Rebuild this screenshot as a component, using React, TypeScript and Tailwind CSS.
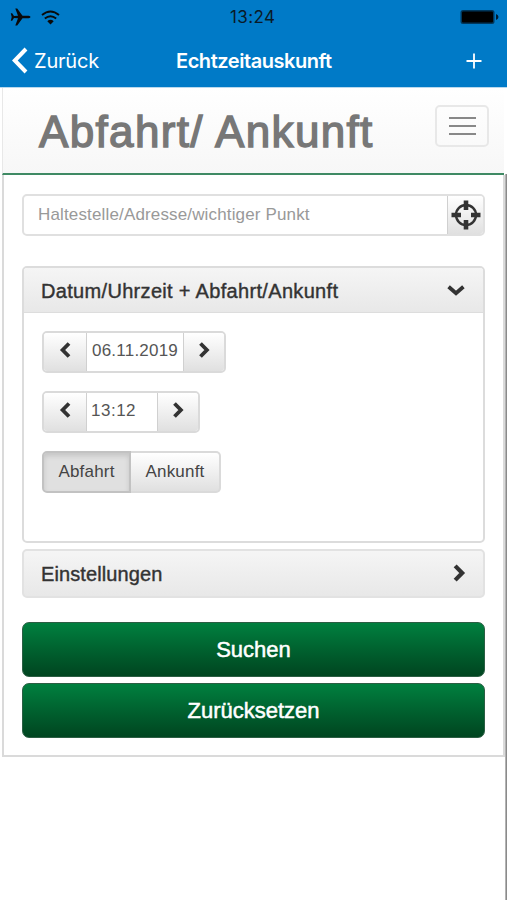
import React from "react";

type Dir = "left" | "right" | "down";

function Chevron({ dir, size = 20 }: { dir: Dir; size?: number }) {
  const d =
    dir === "left"
      ? "M14 3.5 L7.6 10 L14 16.5"
      : dir === "right"
        ? "M6.5 3.5 L12.9 10 L6.5 16.5"
        : "M2.6 6.8 L10 13.2 L17.4 6.8";
  return (
    <svg width={size} height={size} viewBox="0 0 20 20" fill="none" stroke="#333" strokeWidth="3.8">
      <path d={d} />
    </svg>
  );
}

const stepBtn =
  "flex items-center justify-center bg-linear-to-b from-white to-[#e0e0e0] h-full border-[#d0d0d0] pb-[4px]";

function Stepper({ value, fieldClass }: { value: string; fieldClass: string }) {
  return (
    <div className="flex h-[42px] w-fit overflow-hidden rounded-[5px] border-2 border-[#dadada]">
      <button className={`${stepBtn} w-[43px] border-r`}>
        <Chevron dir="left" />
      </button>
      <div className={`flex items-center whitespace-nowrap bg-white pb-[2px] text-[17px] text-[#555] ${fieldClass}`}>
        {value}
      </div>
      <button className={`${stepBtn} w-[41px] border-l`}>
        <Chevron dir="right" />
      </button>
    </div>
  );
}

function StatusBar() {
  return (
    <div className="relative flex h-[34px] items-center justify-between pl-[10px] pr-[8px]">
      <div className="flex items-center gap-[10px]">
        <svg width="21" height="18" viewBox="0 0 21 18" fill="#0a0a0a">
          <path d="M20.5 9 C20.5 8.1 19 7.7 17.5 7.7 L12.5 7.7 L7.2 0.5 L5.3 0.5 L8 7.7 L4 7.9 L2.2 5.3 L0.8 5.3 L1.7 9 L0.8 12.7 L2.2 12.7 L4 10.1 L8 10.3 L5.3 17.5 L7.2 17.5 L12.5 10.3 L17.5 10.3 C19 10.3 20.5 9.9 20.5 9Z" />
        </svg>
        <svg width="19" height="15" viewBox="0 0 19 15" fill="none" stroke="#0a0a0a" strokeWidth="1.9">
          <path d="M1 5 Q9.5 -2.2 18 5" />
          <path d="M3.8 8.6 Q9.5 3.8 15.2 8.6" />
          <path d="M6.3 11.2 Q9.5 8.5 12.7 11.2 L9.5 14.4 Z" fill="#0a0a0a" stroke="none" />
        </svg>
      </div>
      <span className="absolute left-[230px] top-[6px] whitespace-nowrap font-['Inter',sans-serif] text-[17px] leading-[22px] tracking-[0.4px] text-[#0a1a28]">
        13:24
      </span>
      <svg width="39" height="16" viewBox="0 0 39 16">
        <rect x="0.5" y="1" width="34" height="14" rx="2.5" fill="#00375c" />
        <rect x="2" y="2.5" width="31" height="11" rx="1" fill="#000" />
        <path d="M36 5 Q38.5 6 38.5 8 Q38.5 10 36 11Z" fill="#001c30" />
      </svg>
    </div>
  );
}

function NavBar() {
  return (
    <div className="flex h-[53px] items-center pl-[12px] pr-[25px] font-['Inter',sans-serif] text-white">
      <svg width="16" height="27" viewBox="0 0 16 27" fill="none" stroke="#fff" strokeWidth="4">
        <path d="M14 2 L2.8 13.5 L14 25" />
      </svg>
      <span className="ml-[6px] w-[142px] whitespace-nowrap text-[20px] tracking-[-0.2px]">Zurück</span>
      <span className="flex-1 whitespace-nowrap text-[20px] font-semibold tracking-[-0.45px]">
        Echtzeitauskunft
      </span>
      <svg width="16" height="16" viewBox="0 0 16 16" stroke="#fff" strokeWidth="1.8">
        <path d="M8 0.5V15.5M0.5 8H15.5" />
      </svg>
    </div>
  );
}

export default function App() {
  return (
    <div className="h-[900px] w-[507px] overflow-hidden bg-white font-['Liberation_Sans',Arial,sans-serif]">
      <header className="h-[87px] bg-[#007ac7]">
        <StatusBar />
        <NavBar />
      </header>
      <div className="flex h-[813px] border-t border-[#b9d9ee]">
        <main className="ml-[2px] flex-1">
          <div className="mr-px flex h-[87px] justify-between border-b-2 border-l border-b-[#3f8a64] border-l-[#e8e8e8] bg-linear-to-b from-white to-[#f7f7f7] pl-[36px] pr-[15px]">
            <h1 className="mt-[18px] whitespace-nowrap text-[44px] leading-[52px] tracking-[1.35px] text-[#777] [-webkit-text-stroke:1.4px_#777]">
              Abfahrt/ Ankunft
            </h1>
            <button className="mt-[17px] flex h-[42px] w-[54px] flex-col items-center justify-center gap-[6px] rounded-[5px] border-2 border-[#e8e8e8]">
              <span className="h-[2px] w-[27px] bg-[#888]" />
              <span className="h-[2px] w-[27px] bg-[#888]" />
              <span className="h-[2px] w-[27px] bg-[#888]" />
            </button>
          </div>
          <div className="h-[582px] border-2 border-t-0 border-[#dadada] pl-[18px] pr-[18px] pt-[19px]">
            <div className="flex h-[42px] overflow-hidden rounded-[5px] border-2 border-[#e0e0e0]">
              <div className="flex flex-1 items-center whitespace-nowrap pl-[14px] text-[17px] tracking-[0.15px] text-[#999]">
                Haltestelle/Adresse/wichtiger Punkt
              </div>
              <button className="flex w-[36px] items-center justify-center border-l border-[#d0d0d0] bg-linear-to-b from-white to-[#e0e0e0]">
                <svg width="30" height="30" viewBox="0 0 30 30" fill="none" stroke="#333">
                  <circle cx="15" cy="15" r="10" strokeWidth="2.4" />
                  <path d="M15 0.5V10M15 20V29.5M0.5 15H10M20 15H29.5" strokeWidth="4.6" />
                </svg>
              </button>
            </div>

            <section className="mt-[30px] h-[277px] overflow-hidden rounded-[5px] border-2 border-[#dcdcdc]">
              <div className="flex h-[45px] items-center justify-between border-b border-[#ddd] bg-linear-to-b from-[#f5f5f5] to-[#e8e8e8] pl-[17px] pr-[17px]">
                <h2 className="whitespace-nowrap pt-px text-[20px] tracking-[0.32px] text-[#333] [-webkit-text-stroke:0.4px_#333]">
                  Datum/Uhrzeit + Abfahrt/Ankunft
                </h2>
                <Chevron dir="down" />
              </div>
              <div className="flex flex-col gap-[18px] pl-[18px] pt-[18px]">
                <Stepper value="06.11.2019" fieldClass="w-[96px] pl-[5px] tracking-[0.22px]" />
                <Stepper value="13:12" fieldClass="w-[70px] pl-1 tracking-[0.5px]" />
                <div className="flex h-[42px] w-[179px] text-[17px] text-[#444]">
                  <button className="w-[89px] rounded-l-[5px] border-2 border-[#c2c2c2] bg-[#e0e0e0] pb-px shadow-[inset_0_3px_5px_rgba(0,0,0,0.12)]">
                    <span className="tracking-[0.2px]">Abfahrt</span>
                  </button>
                  <button className="flex-1 rounded-r-[5px] border-2 border-l-0 border-[#dadada] bg-linear-to-b from-white to-[#e0e0e0] pb-px">
                    <span className="tracking-[0.2px]">Ankunft</span>
                  </button>
                </div>
              </div>
            </section>

            <section className="mt-[6px] flex h-[49px] items-center justify-between rounded-[5px] border-2 border-[#e2e2e2] bg-linear-to-b from-[#f5f5f5] to-[#e8e8e8] pb-[2px] pl-[17px] pr-[13px]">
              <h2 className="whitespace-nowrap pt-[2px] text-[20px] tracking-[0.1px] text-[#333] [-webkit-text-stroke:0.4px_#333]">
                Einstellungen
              </h2>
              <Chevron dir="right" size={22} />
            </section>

            <div className="mt-[24px] flex flex-col gap-[6px] text-[22px] text-white">
              <button className="h-[55px] rounded-[7px] border border-[#2b5e43] bg-linear-to-b from-[#00803f] to-[#004520] [-webkit-text-stroke:0.5px_#fff]">
                Suchen
              </button>
              <button className="h-[55px] rounded-[7px] border border-[#2b5e43] bg-linear-to-b from-[#00803f] to-[#004520] [-webkit-text-stroke:0.5px_#fff]">
                Zurücksetzen
              </button>
            </div>
          </div>
        </main>
        <div className="mt-[86px] w-[2px] bg-linear-to-r from-[#c8c8c8] to-[#777]" />
      </div>
    </div>
  );
}
